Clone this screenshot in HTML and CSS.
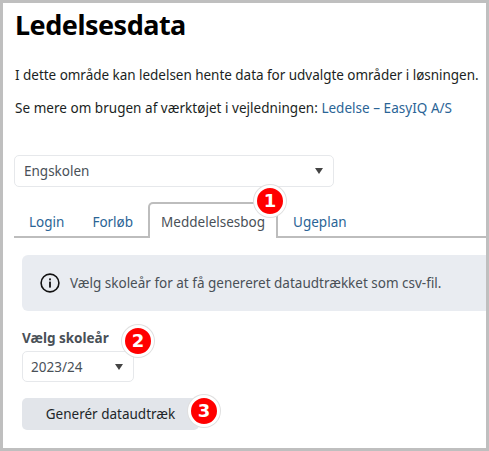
FILE: index.html
```html
<!DOCTYPE html>
<html lang="da">
<head>
  <meta charset="UTF-8">
  <meta name="viewport" content="width=device-width, initial-scale=1">
  <title>Ledelsesdata</title>
  <link rel="stylesheet" href="styles.css">
</head>
<body>

<div class="frame">

  <h1>Ledelsesdata</h1>
  <p class="intro">I dette område kan ledelsen hente data for udvalgte områder i løsningen.</p>
  <p class="guide">Se mere om brugen af værktøjet i vejledningen: <a href="#">Ledelse – EasyIQ A/S</a></p>

  <div class="select school-select">
    <span>Engskolen</span>
    <svg class="caret" width="8" height="6" viewBox="0 0 8 6"><path d="M0 0h8L4 6z"/></svg>
  </div>

  <ul class="tabs">
    <li><a href="#">Login</a></li>
    <li><a href="#">Forløb</a></li>
    <li class="active">
      <a href="#">Meddelelsesbog</a>
      <span class="badge badge-tab">1</span>
    </li>
    <li><a href="#">Ugeplan</a></li>
  </ul>

  <div class="content">
    <div class="alert">
      <svg class="info" width="20" height="20" viewBox="0 0 20 20">
        <circle cx="10" cy="10" r="8.9" fill="none" stroke="#111" stroke-width="1.6"/>
        <rect x="9.1" y="8.6" width="1.8" height="6" fill="#111"/>
        <rect x="9.1" y="5.4" width="1.8" height="1.9" fill="#111"/>
      </svg>
      <span>Vælg skoleår for at få genereret dataudtrækket som csv-fil.</span>
    </div>

    <div class="field">
      <label>Vælg skoleår</label>
      <span class="badge badge-label">2</span>
      <div class="select year-select">
        <span>2023/24</span>
        <svg class="caret" width="8" height="6" viewBox="0 0 8 6"><path d="M0 0h8L4 6z"/></svg>
      </div>
    </div>

    <div class="actions">
      <button type="button">Generér dataudtræk</button>
      <span class="badge badge-button">3</span>
    </div>
  </div>

</div>

</body>
</html>
```

FILE: styles.css
```css
html, body {
  margin: 0;
  height: 100%;
}

body {
  font-family: 'Noto Sans', 'Open Sans', sans-serif;
  font-size: 13.5px;
  color: #212529;
  background: #fff;
}

.frame {
  box-sizing: border-box;
  width: 489px;
  height: 451px;
  border: 3px solid #bfbfbf;
  padding: 0 0 0 11px;
  overflow: hidden;
}

h1 {
  font-size: 27px;
  font-weight: 700;
  letter-spacing: -0.5px;
  line-height: 38px;
  color: #000;
  margin: 3px 0 0 1px;
}

p {
  margin: 0;
  line-height: 20px;
  color: #1b1f23;
}

.intro {
  margin-top: 21px;
  margin-left: 1px;
  letter-spacing: -0.03px;
  white-space: nowrap;
}

.guide {
  margin-top: 13px;
  margin-left: 1px;
  letter-spacing: 0.03px;
}

a {
  color: #2a6496;
  text-decoration: none;
}

.select {
  box-sizing: border-box;
  display: flex;
  align-items: center;
  justify-content: space-between;
  height: 32px;
  padding: 0 10px 0 9px;
  border: 1px solid #e6e8eb;
  border-radius: 5px;
  color: #495057;
  background: #fff;
}

.school-select {
  width: 320px;
  margin-top: 37px;
}

.year-select {
  width: 112px;
  height: 31px;
  padding-left: 8px;
}

.caret {
  fill: #444;
}

.tabs {
  display: flex;
  list-style: none;
  margin: 15px 0 0;
  padding: 0;
  height: 34px;
  border-bottom: 2px solid #bdbdbd;
}

.tabs li {
  position: relative;
  padding: 11px 14px 0;
}

.tabs li:first-child {
  padding-left: 15px;
}

.tabs li:nth-child(2) {
  padding-right: 15px;
}

.tabs li:last-child {
  padding-left: 15px;
}

.tabs .active {
  height: 25px;
  padding: 9px 11px 0;
  background: #fff;
  border: 2px solid #bdbdbd;
  border-bottom: 0;
  border-radius: 5px 5px 0 0;
}

.tabs .active a {
  color: #495057;
}

.content {
  padding-left: 8px;
}

.alert {
  display: flex;
  align-items: center;
  gap: 10px;
  height: 56px;
  margin-top: 17px;
  padding-left: 18px;
  background: #e9ecf1;
  border-radius: 6px 0 0 6px;
  color: #495057;
  white-space: nowrap;
}

.field {
  position: relative;
  margin-top: 17px;
}

label {
  display: block;
  font-weight: 700;
  line-height: 20px;
  color: #495057;
  margin-bottom: 3px;
}

.actions {
  position: relative;
  margin-top: 16px;
}

button {
  display: block;
  width: 177px;
  height: 32px;
  padding: 0;
  border: 0;
  border-radius: 5px;
  font: inherit;
  color: #212529;
  background: #e2e5ea;
}

.badge {
  position: absolute;
  box-sizing: border-box;
  width: 32px;
  height: 32px;
  border-radius: 50%;
  background: #f00;
  border: 3px solid #fff;
  box-shadow: 0 0 0 1px #e0e0e0;
  color: #fff;
  font-family: 'DejaVu Sans', sans-serif;
  font-size: 18px;
  font-weight: 700;
  line-height: 26px;
  text-align: center;
}

.badge-tab {
  top: -19px;
  left: 104px;
}

.badge-label {
  top: -3px;
  left: 100px;
}

.badge-button {
  top: -3px;
  left: 166px;
}
```
